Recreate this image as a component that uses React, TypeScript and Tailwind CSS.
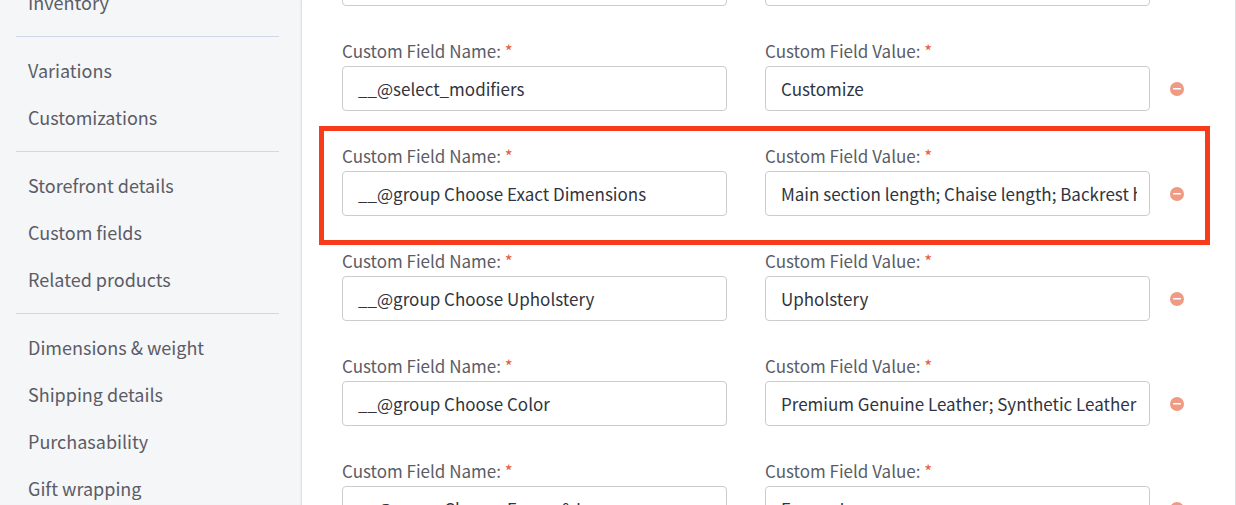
import React, { useId } from "react";

const navGroups: string[][] = [
  ["Inventory"],
  ["Variations", "Customizations"],
  ["Storefront details", "Custom fields", "Related products"],
  ["Dimensions & weight", "Shipping details", "Purchasability", "Gift wrapping"],
];

type CustomField = { name: string; value: string; highlighted?: boolean };

const customFields: CustomField[] = [
  { name: "", value: "" },
  { name: "__@select_modifiers", value: "Customize" },
  {
    name: "__@group Choose Exact Dimensions",
    value: "Main section length; Chaise length; Backrest height",
    highlighted: true,
  },
  { name: "__@group Choose Upholstery", value: "Upholstery" },
  { name: "__@group Choose Color", value: "Premium Genuine Leather; Synthetic Leather" },
  { name: "__@group Choose Frame & Legs", value: "Frame; Legs" },
];

function Sidebar() {
  return (
    <nav className="w-[302px] shrink-0 bg-[#f5f6f8] pl-4 pr-[23px] shadow-[inset_-2px_0_2px_-1px_rgba(49,52,64,0.14)]">
      <div className="-mt-[21px]">
        {navGroups.map((group) => (
          <ul key={group[0]} className="mt-[10px] border-t border-[#d0d7e9] pt-[10px] first:mt-0 first:border-t-0 first:pt-0">
            {group.map((item) => (
              <li key={item}>
                <a href="#" className="block px-3 text-lg leading-[47px] text-[#5b5c66]">
                  {item}
                </a>
              </li>
            ))}
          </ul>
        ))}
      </div>
    </nav>
  );
}

function TextField({ label, value }: { label: string; value: string }) {
  const id = useId();
  return (
    <div className="min-w-0 flex-1">
      <label htmlFor={id} className="mb-[3px] block text-[17px] leading-6 text-[#5b5c66]">
        {label} <span className="text-[#e8603c]">*</span>
      </label>
      <input
        id={id}
        type="text"
        required
        defaultValue={value}
        className="block h-[45px] w-full rounded-[4px] border border-[#cccccc] bg-white pb-px pl-[15px] pr-3 text-[17px] text-[#313440] outline-none"
      />
    </div>
  );
}

function FieldRow({ field }: { field: CustomField }) {
  return (
    <div className="relative flex items-end">
      <div className="flex min-w-0 flex-1 gap-[38px]">
        <TextField label="Custom Field Name:" value={field.name} />
        <TextField label="Custom Field Value:" value={field.value} />
      </div>
      <button type="button" aria-label="Remove field" className="ml-5 flex h-[45px] items-center">
        <svg viewBox="0 0 14 14" className="size-[14px]" aria-hidden="true">
          <circle cx="7" cy="7" r="7" fill="#ef9a82" />
          <rect x="3" y="6.1" width="8" height="1.5" rx="0.4" fill="#fff" />
        </svg>
      </button>
      {field.highlighted && (
        <div className="pointer-events-none absolute -bottom-[29px] -left-[23px] -right-[26px] -top-[18px] border-[5px] border-[#f63c1a]" />
      )}
    </div>
  );
}

export default function App() {
  return (
    <div className="flex h-screen overflow-hidden bg-white font-['Noto_Sans_CJK_SC',sans-serif]">
      <Sidebar />
      <main className="min-w-0 flex-1 border-r border-[#dddee2] pl-10 pr-[51px]">
        <form className="-mt-[66px] flex flex-col gap-[33px]">
          {customFields.map((field, index) => (
            <FieldRow key={index} field={field} />
          ))}
        </form>
      </main>
    </div>
  );
}
